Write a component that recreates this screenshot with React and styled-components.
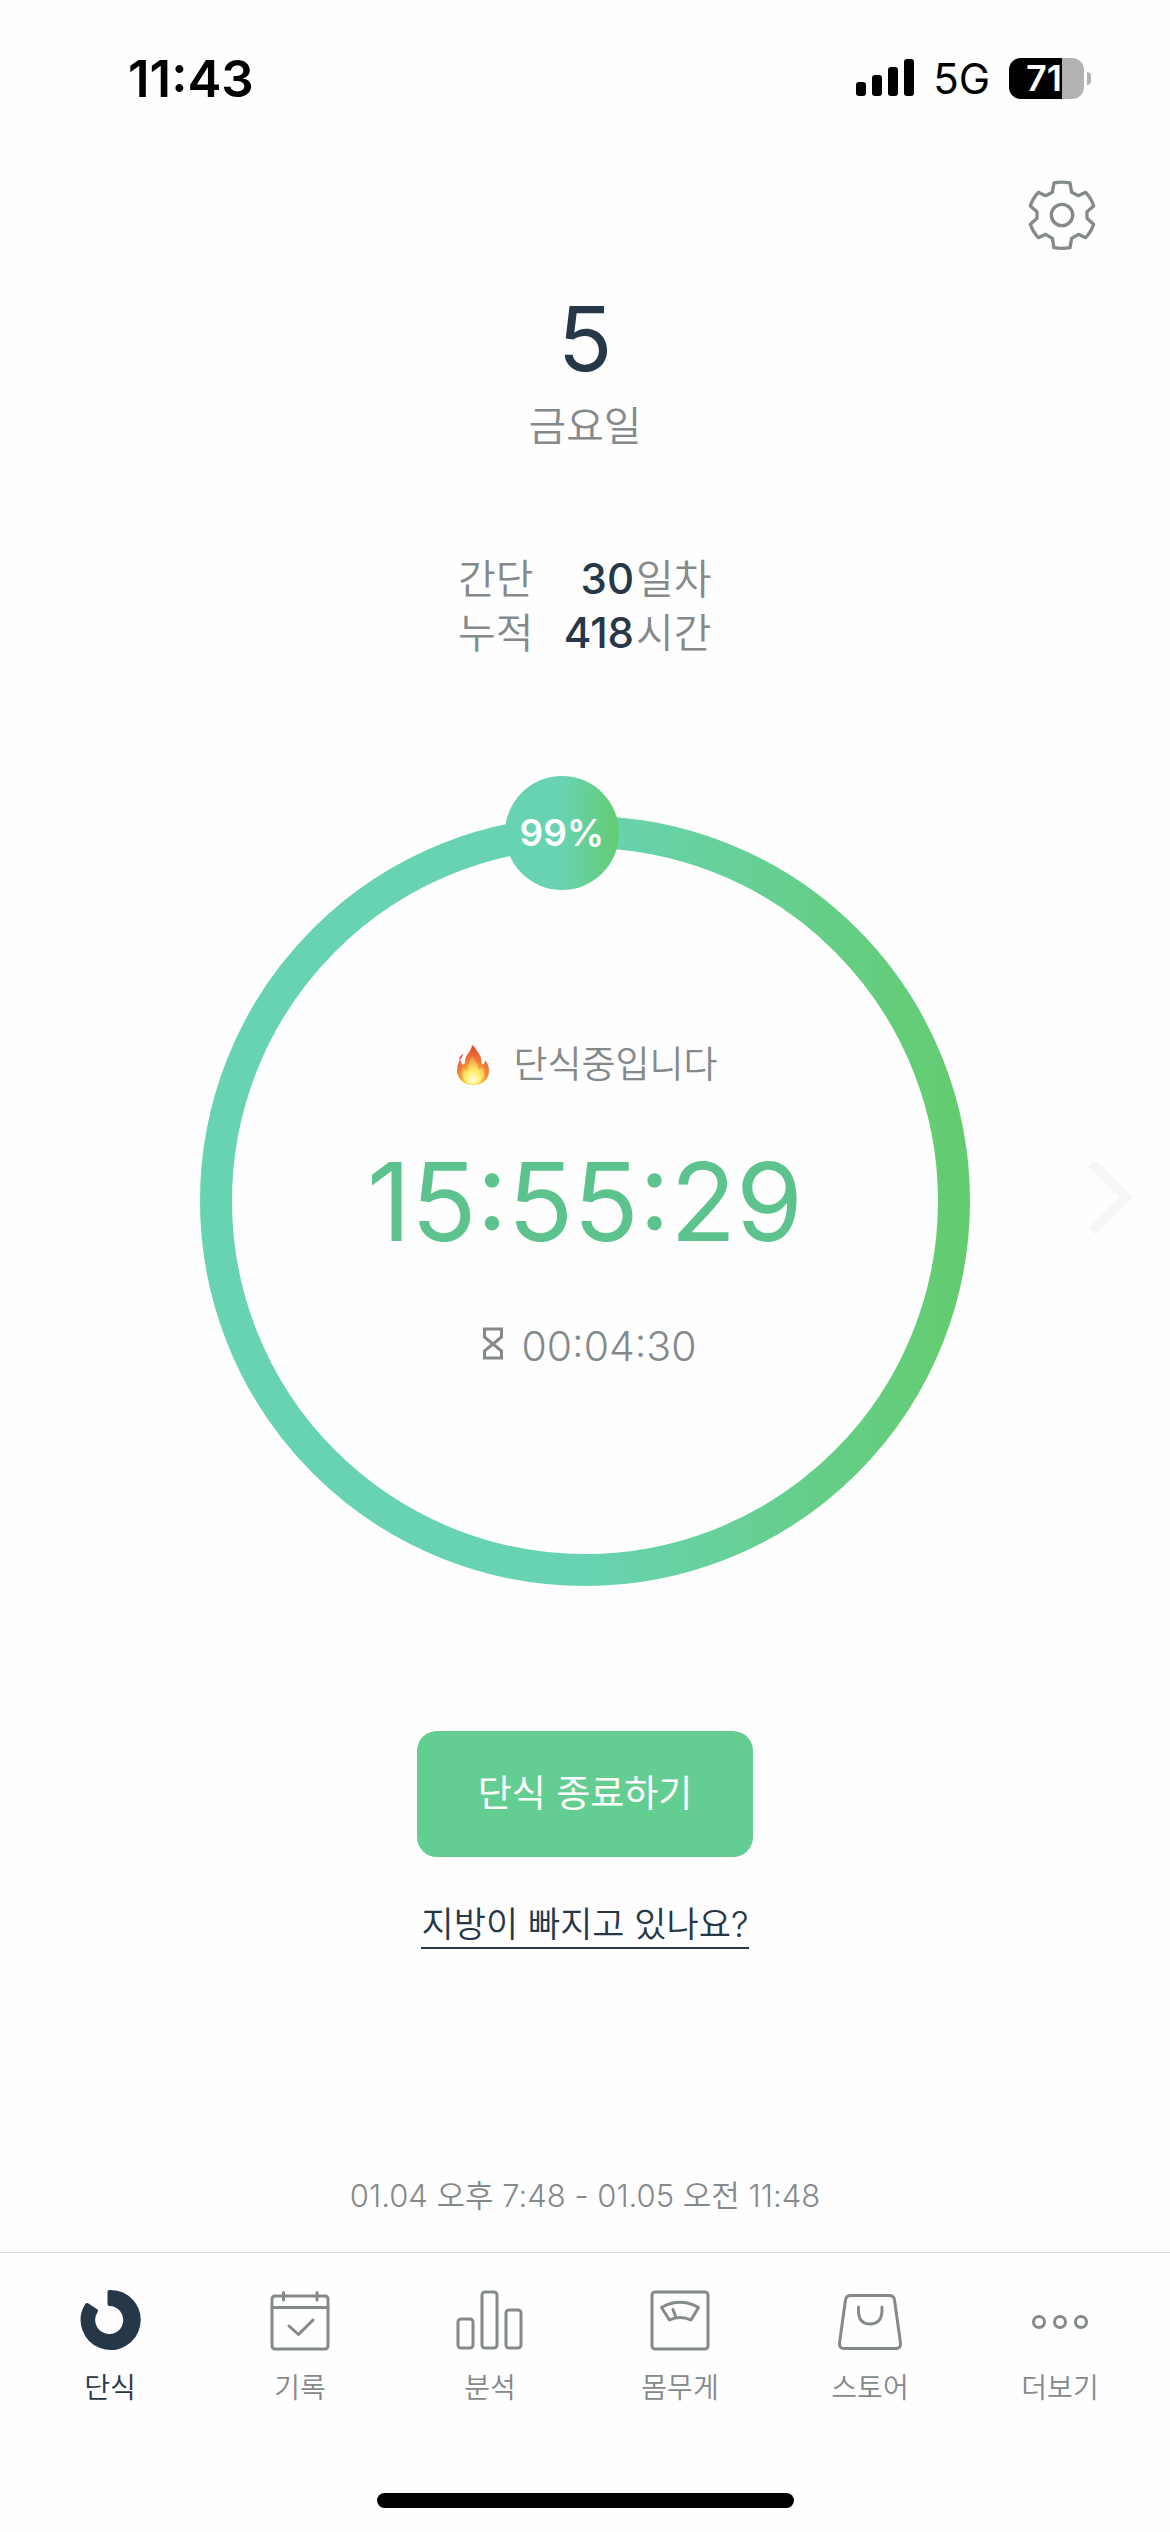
import React from 'react';
import styled, { createGlobalStyle } from 'styled-components';

const GlobalStyle = createGlobalStyle`
  * {
    box-sizing: border-box;
  }
  body {
    margin: 0;
    background: #fefefe;
    color: #84898c;
    font-family: Inter, "Noto Sans CJK KR", sans-serif;
  }
  button {
    padding: 0;
    border: 0;
    background: none;
    color: inherit;
    font: inherit;
    cursor: pointer;
  }
  svg {
    display: block;
  }
`;

const navy = '#263747';

const fasting = {
  day: '5',
  weekday: '금요일',
  percent: 99,
  elapsed: '15:55:29',
  left: '00:04:30',
  range: '01.04 오후 7:48 - 01.05 오전 11:48',
};

const stats = [
  { id: 1, label: '간단', value: 30, unit: '일차' },
  { id: 2, label: '누적', value: 418, unit: '시간' },
];

const RING = 770;
const STROKE = 32;

/* ---------- icons ---------- */

const SignalIcon = () => (
  <svg width="58" height="38" viewBox="0 0 58 38" fill="#000">
    <rect x="0" y="23" width="10" height="14" rx="3" />
    <rect x="16" y="16" width="10" height="21" rx="3" />
    <rect x="32" y="8" width="10" height="29" rx="3" />
    <rect x="48" y="0" width="10" height="37" rx="3" />
  </svg>
);

const GearIcon = () => (
  <svg width="70" height="74" viewBox="-105 -111 210 222" fill="none" stroke="#84898c" strokeWidth="10" strokeLinejoin="round">
    <path d="M-24 -96Q0 -101 24 -96L29 -68L49 -58L71 -68Q88 -50 95 -27L75 -10V10L95 28Q88 50 71 68L49 58L29 70L24 98Q0 102 -24 98L-29 70L-49 58L-71 68Q-88 50 -95 28L-75 10V-10L-95 -27Q-88 -50 -71 -68L-49 -58L-29 -68Z" />
    <circle r="32" />
  </svg>
);

const FlameIcon = () => (
  <svg width="37" height="40" viewBox="-5 0 37 40">
    <defs>
      <radialGradient id="flame" cx="0.5" cy="0.88" r="0.85">
        <stop offset="0" stopColor="#fdf07a" />
        <stop offset="0.3" stopColor="#f9c23c" />
        <stop offset="0.6" stopColor="#ee7a3a" />
        <stop offset="1" stopColor="#e2492c" />
      </radialGradient>
      <radialGradient id="flameCore" cx="0.5" cy="0.85" r="0.8">
        <stop offset="0" stopColor="#fffde0" />
        <stop offset="0.4" stopColor="#fff06a" />
        <stop offset="1" stopColor="#f0934a" />
      </radialGradient>
    </defs>
    <path fill="url(#flame)" d="M16 40C6 40 0 33 0 25C0 20 2 17 3 14C4 16 4 18 5 19C6 20 8 19 8 17C8 9 14 8 15 0C18 2 20 6 22 9C25 13 24 16 25 19C27 20 28 18 28 15C31 19 32 22 32 26C32 34 26 40 16 40Z" />
    <path fill="#e2492c" d="M2 15C2 12 4 11 6 9C6 12 4 13 2 15Z" />
    <path fill="url(#flameCore)" d="M16 39C9 39 5 34 5 29C5 26 6 24 7 23C8 25 9 26 10 25C12 21 11 16 16 11C17 16 21 17 21 23C22 25 23 24 25 22C27 25 27 27 27 30C27 35 23 39 16 39Z" />
  </svg>
);

const HourglassIcon = () => (
  <svg width="30" height="38" viewBox="-10 0 30 38" fill="none" stroke="#84898c" strokeWidth="3">
    <path d="M1.5 2H18.5V10L10 17L18.5 24V31H1.5V24L10 17L1.5 10Z" />
  </svg>
);

const ChevronIcon = () => (
  <svg width="46" height="78" viewBox="0 0 46 78" fill="none" stroke="#f4f7f6" strokeWidth="9">
    <path d="M4 1L38 35L4 69" />
  </svg>
);

const FastingIcon = () => (
  <svg width="66" height="66" viewBox="0 0 66 66" fill={navy} stroke={navy} strokeWidth="4" strokeLinejoin="round">
    <path d="M32.500 5A28 28 0 1 1 10 18L19 24A16 16 0 1 0 32.500 17Z" />
  </svg>
);

const RecordIcon = () => (
  <svg width="66" height="66" viewBox="0 0 66 66" fill="none" stroke="#84898c" strokeWidth="3" strokeLinecap="round" strokeLinejoin="round">
    <rect x="5" y="9" width="56" height="53" rx="3" />
    <path d="M5 20.500H61M16.500 5.500V13M50 5.500V13M22 39L31.500 47.500L46 33" />
  </svg>
);

const ChartIcon = () => (
  <svg width="70" height="66" viewBox="-3 0 70 66" fill="none" stroke="#84898c" strokeWidth="3">
    <rect x="0" y="32" width="15" height="29" rx="3" />
    <rect x="24" y="5" width="15" height="56" rx="3" />
    <rect x="48" y="23" width="15" height="38" rx="3" />
  </svg>
);

const ScaleIcon = () => (
  <svg width="66" height="66" viewBox="0 0 66 66" fill="none" stroke="#84898c" strokeWidth="3" strokeLinecap="round" strokeLinejoin="round">
    <rect x="5" y="5" width="56" height="57" rx="3" />
    <path d="M14.500 20.500Q33 10 51.500 20.500L44 33Q33 28 22.500 33ZM26 22.500L29 30.500" />
  </svg>
);

const StoreIcon = () => (
  <svg width="66" height="66" viewBox="0 0 66 66" fill="none" stroke="#84898c" strokeWidth="3" strokeLinecap="round" strokeLinejoin="round">
    <path d="M14 8.500H52Q57 8.500 57.500 13L63.500 56Q64 61.500 59 61.500H7Q2 61.500 2.500 56L8.500 13Q9 8.500 14 8.500Z" />
    <path d="M21.500 20V25Q22 37 33 37Q44 37 45 25V20" />
  </svg>
);

const MoreIcon = () => (
  <svg width="66" height="66" viewBox="0 0 66 66" fill="none" stroke="#84898c" strokeWidth="3">
    <circle cx="12" cy="35" r="5.500" />
    <circle cx="33" cy="35" r="5.500" />
    <circle cx="54" cy="35" r="5.500" />
  </svg>
);

const tabs = [
  { id: 'fasting', label: '단식', Icon: FastingIcon },
  { id: 'record', label: '기록', Icon: RecordIcon },
  { id: 'chart', label: '분석', Icon: ChartIcon },
  { id: 'weight', label: '몸무게', Icon: ScaleIcon },
  { id: 'store', label: '스토어', Icon: StoreIcon },
  { id: 'more', label: '더보기', Icon: MoreIcon },
];

/* ---------- parts ---------- */

const ProgressRing = ({ percent, children }) => {
  const angle = (percent / 100) * 2 * Math.PI;
  const radius = (RING - STROKE) / 2;
  const x = RING / 2 + radius * Math.sin(angle);
  const y = RING / 2 - radius * Math.cos(angle);

  return (
    <Ring>
      <RingTrack viewBox={`0 0 ${RING} ${RING}`}>
        <defs>
          <linearGradient id="ring">
            <stop offset="0.5" stopColor="#68d3b2" />
            <stop offset="1" stopColor="#63cc71" />
          </linearGradient>
        </defs>
        <circle cx={RING / 2} cy={RING / 2} r={radius} fill="none" stroke="url(#ring)" strokeWidth={STROKE} />
      </RingTrack>
      <RingBadge style={{ left: `${(x / RING) * 100}%`, top: `${(y / RING) * 100}%` }}>{percent}%</RingBadge>
      <RingContent>{children}</RingContent>
    </Ring>
  );
};

const App = () => {
  return (
    <Page>
      <GlobalStyle />
      <StatusBar>
        <Clock>11:43</Clock>
        <StatusIcons>
          <SignalIcon />
          <Network>5G</Network>
          <Battery>
            <BatteryBody>
              <BatteryLevel>71</BatteryLevel>
            </BatteryBody>
            <BatteryTip />
          </Battery>
        </StatusIcons>
      </StatusBar>

      <Header>
        <button type="button" aria-label="설정">
          <GearIcon />
        </button>
      </Header>

      <Main>
        <Day>{fasting.day}</Day>
        <Weekday>{fasting.weekday}</Weekday>

        <Stats>
          {stats.map((stat) => (
            <StatRow key={stat.id}>
              <span>{stat.label}</span>
              <StatValue>{stat.value}</StatValue>
              <span>{stat.unit}</span>
            </StatRow>
          ))}
        </Stats>

        <TimerRow>
          <ProgressRing percent={fasting.percent}>
            <State>
              <FlameIcon />
              단식중입니다
            </State>
            <Elapsed>{fasting.elapsed}</Elapsed>
            <Left>
              <HourglassIcon />
              {fasting.left}
            </Left>
          </ProgressRing>
          <NextButton type="button" aria-label="다음">
            <ChevronIcon />
          </NextButton>
        </TimerRow>

        <EndButton type="button">단식 종료하기</EndButton>
        <HelpLink href="#help">지방이 빠지고 있나요?</HelpLink>
        <Range>{fasting.range}</Range>
      </Main>

      <Footer>
        <TabBar>
          {tabs.map(({ id, label, Icon }) => (
            <Tab key={id} href={`#${id}`} $active={id === 'fasting'}>
              <Icon />
              {label}
            </Tab>
          ))}
        </TabBar>
        <HomeIndicator />
      </Footer>
    </Page>
  );
};

const Page = styled.div`
  display: flex;
  flex-direction: column;
  min-height: 100vh;
`;

const StatusBar = styled.div`
  display: flex;
  align-items: center;
  justify-content: space-between;
  height: 156px;
  padding: 0 79px 0 128px;
  color: #000;
`;

const Clock = styled.span`
  font-size: 51px;
  font-weight: 600;
`;

const StatusIcons = styled.div`
  display: flex;
  align-items: center;
  gap: 19px;
`;

const Network = styled.span`
  font-size: 42px;
`;

const Battery = styled.div`
  display: flex;
  align-items: center;
  gap: 3px;
`;

const BatteryBody = styled.div`
  width: 75px;
  border-radius: 12px;
  background: #b2b2b2;
`;

const BatteryLevel = styled.div`
  width: 71%;
  padding-left: 17px;
  border-radius: 12px 0 0 12px;
  background: #000;
  color: #fff;
  font-size: 36px;
  font-weight: 600;
  line-height: 41px;
`;

const BatteryTip = styled.div`
  width: 4px;
  height: 13px;
  border-radius: 0 6px 6px 0;
  background: #b2b2b2;
`;

const Header = styled.header`
  display: flex;
  align-items: center;
  justify-content: flex-end;
  height: 118px;
  padding: 0 73px;
`;

const Main = styled.main`
  display: flex;
  flex: 1;
  flex-direction: column;
  align-items: center;
  padding: 15px 0 32px;
`;

const Day = styled.div`
  color: ${navy};
  font-size: 90px;
  line-height: 100px;
`;

const Weekday = styled.div`
  font-size: 41px;
  font-weight: 350;
  line-height: 74px;
`;

const Stats = styled.div`
  margin-top: 89px;
  font-size: 41px;
  font-weight: 350;
  line-height: 54px;
  white-space: nowrap;
`;

const StatRow = styled.div`
  display: grid;
  grid-template-columns: 76px 102px 76px;
`;

const StatValue = styled.strong`
  padding-right: 2px;
  color: ${navy};
  font-size: 42px;
  font-weight: 500;
  text-align: right;
`;

const TimerRow = styled.div`
  display: grid;
  grid-template-columns: 1fr auto 1fr;
  align-items: center;
  width: 100%;
  margin-top: 156px;
`;

const Ring = styled.div`
  position: relative;
  grid-column: 2;
  width: ${RING}px;
  max-width: 80vw;
`;

const RingTrack = styled.svg`
  width: 100%;
`;

const RingBadge = styled.div`
  position: absolute;
  display: flex;
  align-items: center;
  justify-content: center;
  width: 114px;
  height: 114px;
  border-radius: 50%;
  background: linear-gradient(90deg, #68d3b2 50%, #63cc71);
  color: #fff;
  font-size: 37px;
  font-weight: 600;
  transform: translate(-50%, -50%);
`;

const RingContent = styled.div`
  position: absolute;
  inset: 0;
  display: flex;
  flex-direction: column;
  align-items: center;
  justify-content: center;
  padding-top: 8px;
`;

const State = styled.div`
  display: flex;
  align-items: center;
  gap: 24px;
  font-size: 37px;
  font-weight: 350;
  line-height: 60px;
`;

const Elapsed = styled.div`
  margin: 42px 0 49px;
  color: #5dc38e;
  font-size: 108px;
  line-height: 130px;
`;

const Left = styled.div`
  display: flex;
  align-items: center;
  gap: 18px;
  font-size: 41px;
  font-weight: 350;
  line-height: 60px;
`;

const NextButton = styled.button`
  justify-self: end;
  margin-right: 36px;
`;

const EndButton = styled.button`
  margin-top: 145px;
  padding: 0 61px;
  border-radius: 20px;
  background: #64ce92;
  color: #fff;
  font-size: 37px;
  line-height: 126px;
`;

const HelpLink = styled.a`
  margin-top: 45px;
  border-bottom: 2px solid ${navy};
  color: ${navy};
  font-size: 35px;
  font-weight: 350;
  line-height: 45px;
  text-decoration: none;
`;

const Range = styled.div`
  margin-top: auto;
  font-size: 31px;
  font-weight: 350;
  line-height: 48px;
`;

const Footer = styled.footer`
  display: flex;
  flex-direction: column;
  align-items: center;
  height: 280px;
  border-top: 1px solid #d6dadb;
`;

const TabBar = styled.nav`
  display: grid;
  grid-template-columns: repeat(6, 1fr);
  width: 100%;
  padding: 34px 15px 0;
`;

const Tab = styled.a`
  display: flex;
  flex-direction: column;
  align-items: center;
  gap: 15px;
  color: ${({ $active }) => ($active ? navy : '#84898c')};
  font-size: 28px;
  font-weight: 350;
  line-height: 40px;
  text-decoration: none;
`;

const HomeIndicator = styled.div`
  width: 417px;
  height: 15px;
  margin: auto 0 24px;
  border-radius: 8px;
  background: #000;
`;

export default App;
